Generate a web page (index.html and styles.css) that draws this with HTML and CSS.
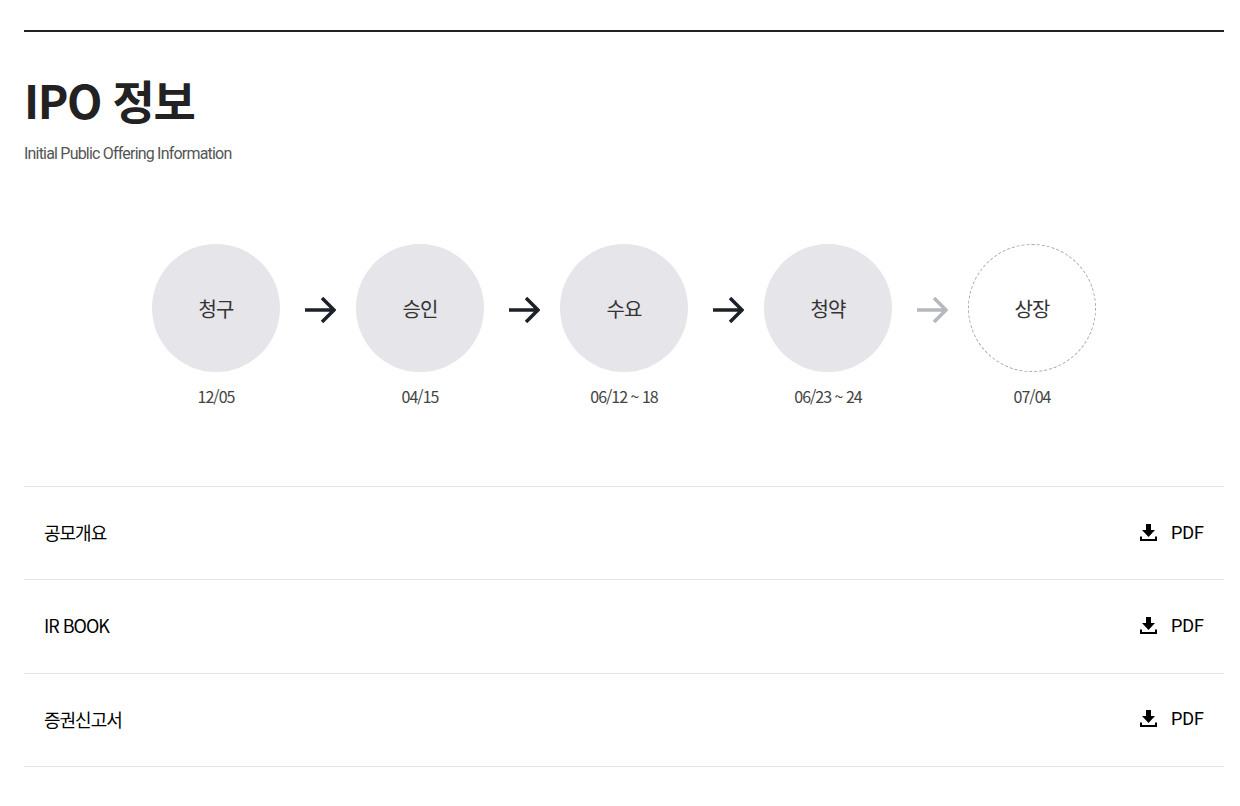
FILE: index.html
```html
<!DOCTYPE html>
<html lang="ko">
<head>
  <meta charset="UTF-8">
  <title>IPO 정보</title>
  <link rel="stylesheet" href="styles.css">
</head>
<body>
<div class="ipo-section">
  <h2 class="ipo-title">IPO 정보</h2>
  <p class="ipo-sub">Initial Public Offering Information</p>

  <!-- Schedule -->
  <div class="steps">
    <div class="step">
      <div class="circle">청구</div>
      <div class="date">12/05</div>
    </div>
    <svg class="arrow" viewBox="0 0 31 26" width="31" height="26"><path d="M0 13H29M17 1L29 13L17 25" fill="none" stroke="#1c2029" stroke-width="3.5"/></svg>
    <div class="step">
      <div class="circle">승인</div>
      <div class="date">04/15</div>
    </div>
    <svg class="arrow" viewBox="0 0 31 26" width="31" height="26"><path d="M0 13H29M17 1L29 13L17 25" fill="none" stroke="#1c2029" stroke-width="3.5"/></svg>
    <div class="step">
      <div class="circle">수요</div>
      <div class="date">06/12 ~ 18</div>
    </div>
    <svg class="arrow" viewBox="0 0 31 26" width="31" height="26"><path d="M0 13H29M17 1L29 13L17 25" fill="none" stroke="#1c2029" stroke-width="3.5"/></svg>
    <div class="step">
      <div class="circle">청약</div>
      <div class="date">06/23 ~ 24</div>
    </div>
    <svg class="arrow" viewBox="0 0 31 26" width="31" height="26"><path d="M0 13H29M17 1L29 13L17 25" fill="none" stroke="#b5b8c0" stroke-width="3.5"/></svg>
    <div class="step">
      <div class="circle circle-next">상장</div>
      <div class="date">07/04</div>
    </div>
  </div>

  <!-- Documents -->
  <ul class="docs">
    <li class="doc-row">
      <span class="doc-name">공모개요</span>
      <a class="doc-link" href="#"><svg viewBox="0 0 17 17" width="17" height="17"><path d="M6 0H11V6H15L8.5 13L2 6H6Z M0 12.5H2V15H15V12.5H17V17H0Z" fill="#000"/></svg>PDF</a>
    </li>
    <li class="doc-row">
      <span class="doc-name">IR BOOK</span>
      <a class="doc-link" href="#"><svg viewBox="0 0 17 17" width="17" height="17"><path d="M6 0H11V6H15L8.5 13L2 6H6Z M0 12.5H2V15H15V12.5H17V17H0Z" fill="#000"/></svg>PDF</a>
    </li>
    <li class="doc-row">
      <span class="doc-name">증권신고서</span>
      <a class="doc-link" href="#"><svg viewBox="0 0 17 17" width="17" height="17"><path d="M6 0H11V6H15L8.5 13L2 6H6Z M0 12.5H2V15H15V12.5H17V17H0Z" fill="#000"/></svg>PDF</a>
    </li>
  </ul>
</div>
</body>
</html>
```

FILE: styles.css
```css
body {
  margin: 0;
  padding: 30px 16px 0 24px;
  background-color: #fff;
  font-family: "Noto Sans CJK KR", "Noto Sans", sans-serif;
  color: #222;
}

.ipo-section {
  border-top: 2px solid #222;
}

.ipo-title {
  margin: 37px 0 0;
  font-size: 46px;
  line-height: 60px;
  font-weight: 700;
  letter-spacing: -1.4px;
  color: #222;
}

.ipo-sub {
  margin: 13px 0 0;
  font-family: Roboto, "Noto Sans CJK KR", sans-serif;
  font-size: 16px;
  line-height: 24px;
  letter-spacing: -0.8px;
  color: #555;
}

.steps {
  display: flex;
  justify-content: center;
  align-items: flex-start;
  margin-top: 78px;
}

.step {
  width: 128px;
}

.circle {
  display: flex;
  justify-content: center;
  align-items: center;
  box-sizing: border-box;
  width: 128px;
  height: 128px;
  border-radius: 50%;
  background-color: #e5e5ea;
  font-size: 20px;
  letter-spacing: -1px;
  color: #333;
}

.circle-next {
  background-color: #fff;
  border: 1px dashed #aaa;
}

.date {
  margin-top: 12px;
  text-align: center;
  font-size: 16px;
  line-height: 24px;
  letter-spacing: -1px;
  color: #444;
}

.arrow {
  flex-shrink: 0;
  margin: 53px 20px 0 25px;
}

.docs {
  list-style: none;
  margin: 78px 0 0;
  padding: 0;
  border-top: 1px solid #e5e5e5;
}

.doc-row {
  display: flex;
  justify-content: space-between;
  align-items: center;
  height: 90.33px;
  padding: 0 20px 2px;
  border-bottom: 1px solid #e5e5e5;
  font-size: 18px;
  color: #000;
}

.doc-name {
  letter-spacing: -1px;
}

.doc-link {
  display: flex;
  align-items: center;
  gap: 14px;
  font-family: Roboto, sans-serif;
  color: #000;
  text-decoration: none;
}
```
